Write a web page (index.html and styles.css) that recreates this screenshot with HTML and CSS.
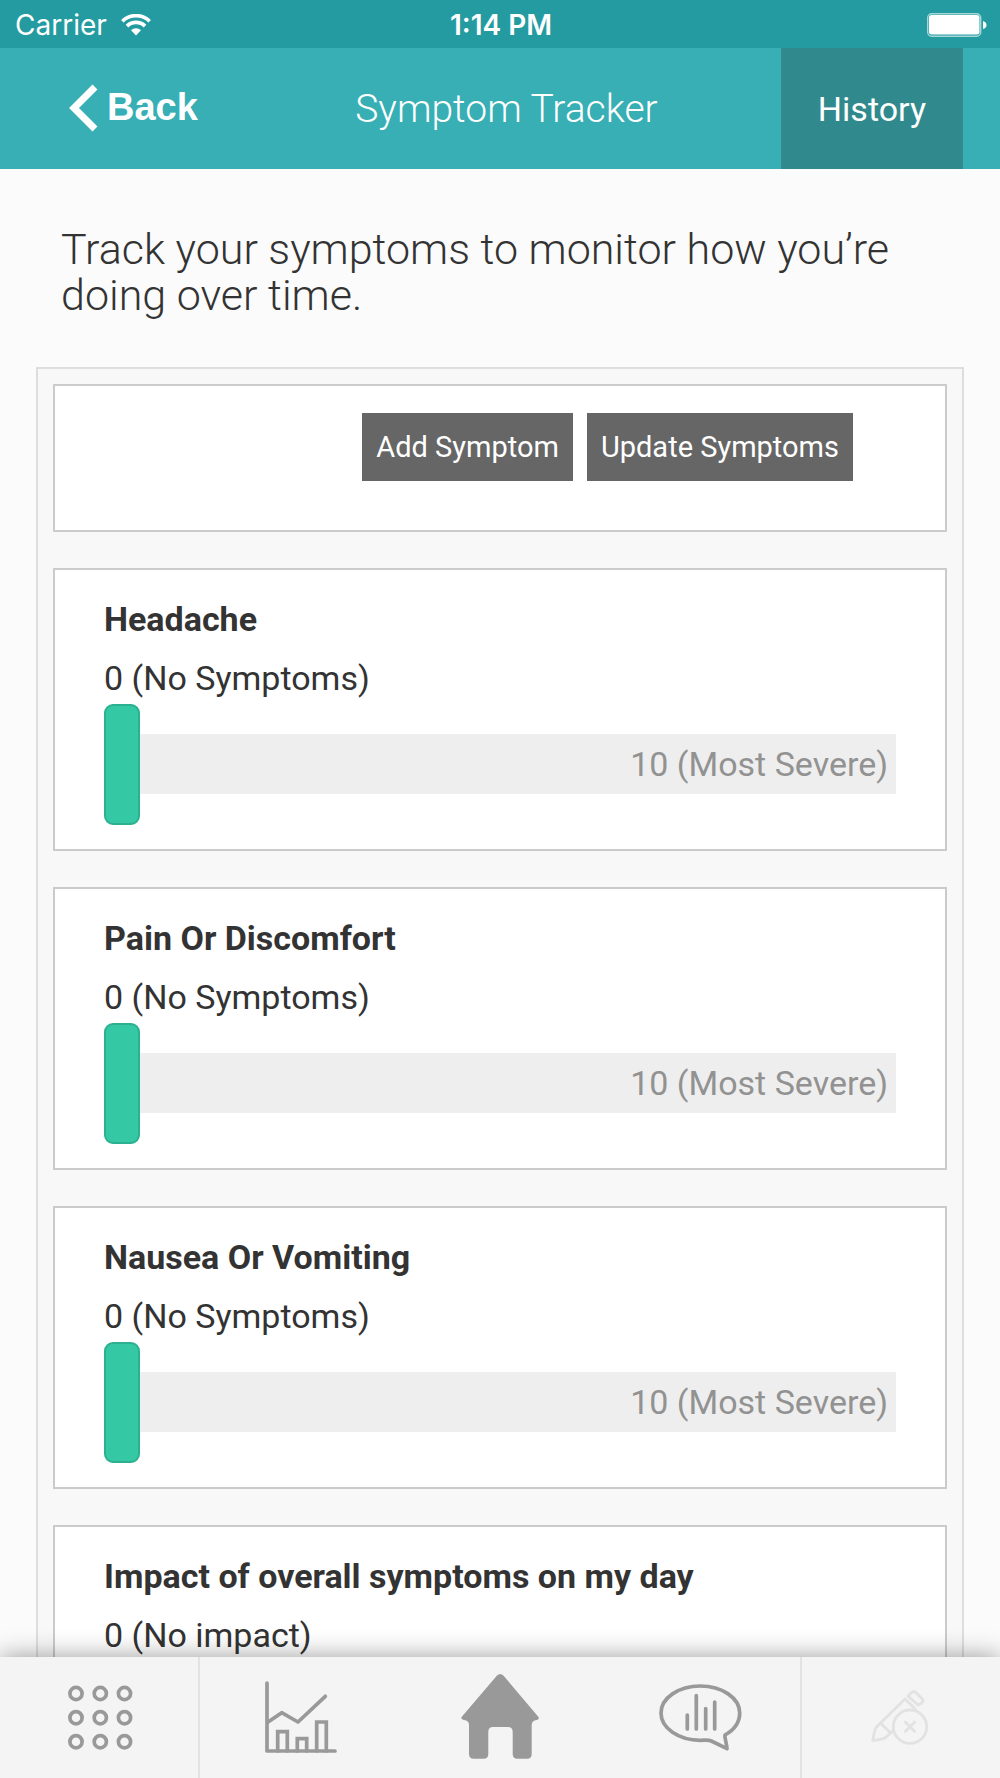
FILE: index.html
```html
<!DOCTYPE html>
<html lang="en">
<head>
    <meta charset="UTF-8">
    <meta name="viewport" content="width=device-width, initial-scale=1.0">
    <title>Symptom Tracker</title>
    <link rel="stylesheet" href="styles.css">
</head>
<body>
    <div class="status-bar">
        <div class="carrier">
            <span>Carrier</span>
            <svg width="30" height="22" viewBox="0 0 30 22" fill="none" stroke="#fff" stroke-width="3.6">
                <path d="M1.3 7.2a19.5 19.5 0 0 1 27.4 0"/>
                <path d="M6 12.1a12.8 12.8 0 0 1 18 0"/>
                <path d="M15 21.5l-5-5.2a7 7 0 0 1 10 0z" fill="#fff" stroke="none"/>
            </svg>
        </div>
        <div class="time">1:14 PM</div>
        <svg class="battery" width="60" height="24" viewBox="0 0 60 24">
            <rect x="0.7" y="0.7" width="53" height="22.6" rx="4" fill="none" stroke="#a5d7d8" stroke-width="1.4"/>
            <rect x="2" y="2" width="50.5" height="19.5" rx="2.5" fill="#fff"/>
            <path d="M56 8q3.5 1 3.5 4t-3.5 4z" fill="#fff"/>
        </svg>
    </div>

    <header class="navbar">
        <a class="back" href="#">
            <svg width="30" height="48" viewBox="0 0 30 48" fill="none" stroke="#fff" stroke-width="7">
                <path d="M26 3L5 24l21 21"/>
            </svg>
            <span>Back</span>
        </a>
        <h1>Symptom Tracker</h1>
        <button class="history" type="button">History</button>
    </header>

    <main>
        <p class="intro">Track your symptoms to monitor how you’re doing over time.</p>

        <div class="panel">
            <div class="card actions">
                <button type="button">Add Symptom</button>
                <button type="button">Update Symptoms</button>
            </div>

            <div class="card">
                <label class="name" for="headache">Headache</label>
                <div class="value">0 (No Symptoms)</div>
                <div class="slider">
                    <input type="range" id="headache" min="0" max="10" value="0">
                    <span class="max">10 (Most Severe)</span>
                </div>
            </div>

            <div class="card">
                <label class="name" for="pain">Pain Or Discomfort</label>
                <div class="value">0 (No Symptoms)</div>
                <div class="slider">
                    <input type="range" id="pain" min="0" max="10" value="0">
                    <span class="max">10 (Most Severe)</span>
                </div>
            </div>

            <div class="card">
                <label class="name" for="nausea">Nausea Or Vomiting</label>
                <div class="value">0 (No Symptoms)</div>
                <div class="slider">
                    <input type="range" id="nausea" min="0" max="10" value="0">
                    <span class="max">10 (Most Severe)</span>
                </div>
            </div>

            <div class="card">
                <label class="name" for="impact">Impact of overall symptoms on my day</label>
                <div class="value">0 (No impact)</div>
                <div class="slider">
                    <input type="range" id="impact" min="0" max="10" value="0">
                </div>
            </div>
        </div>
    </main>

    <nav class="tabs">
        <a href="#" aria-label="Menu">
            <svg viewBox="-1 0 100 121">
                <circle cx="26" cy="36.5" r="6.1"/><circle cx="50.3" cy="36.5" r="6.1"/><circle cx="74.5" cy="36.5" r="6.1"/>
                <circle cx="26" cy="60.7" r="6.1"/><circle cx="50.3" cy="60.7" r="6.1"/><circle cx="74.5" cy="60.7" r="6.1"/>
                <circle cx="26" cy="84.7" r="6.1"/><circle cx="50.3" cy="84.7" r="6.1"/><circle cx="74.5" cy="84.7" r="6.1"/>
            </svg>
        </a>
        <a href="#" aria-label="Charts">
            <svg viewBox="0 0 100 121">
                <path d="M17 26v68h68"/>
                <path d="M17.7 65.3l14-9.6L48 65l27.3-25.7"/>
                <path d="M27.7 94V74.7h9.6V94M47.3 94V81.7h9.4V94M66.7 94V65h9.6v29" stroke-linejoin="miter"/>
            </svg>
        </a>
        <a href="#" aria-label="Home">
            <svg class="solid" viewBox="0 0 100 121">
                <path d="M47 18.5q3.2-3 6.4 0L88.5 60q1.3 2.6-1.8 2.9-5 .6-5 4.8V97q0 4.7-4.7 4.7h-9.6q-4.700 0-4.700-4.700V74.700q0-4.700-4.700-4.700H43q-4.700 0-4.700 4.700V97q0 4.700-4.700 4.700H23.700Q19 101.700 19 97V67.700q0-4.200-5-4.800-3.600-.4-2.400-2.900z"/>
            </svg>
        </a>
        <a href="#" aria-label="Messages">
            <svg viewBox="0 0 100 121">
                <path d="M75 78C84 73 89.700 65 89.700 56 89.700 41 72 29 50.300 29S11 41 11 56s17.500 27.300 39.300 27.300c6 0 8-.6 11 .7L77 91.700c-.3-5-2.600-11.500-2-13.700z"/>
                <path d="M37.300 72V58M46.300 72V38.500M55.700 72V51.500M64.700 72V45"/>
            </svg>
        </a>
        <a class="disabled" href="#" aria-label="Edit">
            <svg viewBox="1 0 100 121">
                <circle cx="60" cy="69.700" r="16.700"/>
                <path d="M55.300 65l9.400 9.400M64.700 65l-9.400 9.400"/>
                <path d="M65.300 52L55 42 27 69.500q-2 2-2.500 5l-1.800 9.200 9-1.600q3-.6 5-2.600l6.500-6"/>
                <path d="M30.700 66.300l10 9.700"/>
                <path d="M58 39l3.500-3.500q2.200-2.200 4.400 0l6 6q2.200 2.200 0 4.400L68 48z"/>
            </svg>
        </a>
    </nav>
</body>
</html>
```
FILE: styles.css
```css
* {
    box-sizing: border-box;
}
body {
    margin: 0;
    height: 100vh;
    display: flex;
    flex-direction: column;
    font-family: Roboto, sans-serif;
    color: #333;
    background: #fbfbfb;
}
button {
    border: none;
    font-family: inherit;
    color: white;
    cursor: pointer;
}

/* status bar */
.status-bar {
    display: grid;
    grid-template-columns: 1fr auto 1fr;
    align-items: center;
    height: 48px;
    padding: 2px 13px 0 15px;
    background: #239ba0;
    color: white;
    font-family: Inter, sans-serif;
    font-size: 28px;
}
.carrier {
    display: flex;
    align-items: center;
    gap: 14px;
}
.time {
    font-weight: 600;
}
.battery {
    justify-self: end;
}

/* nav bar */
.navbar {
    display: grid;
    grid-template-columns: 1fr auto 1fr;
    align-items: center;
    height: 121px;
    padding: 0 37px 0 50px;
    background: #37afb4;
    color: white;
}
.back {
    display: flex;
    align-items: center;
    gap: 8px;
    padding: 0 0 2px 19px;
    color: white;
    font-family: "Liberation Sans", Arial, sans-serif;
    font-size: 38px;
    font-weight: bold;
    text-decoration: none;
}
.navbar h1 {
    margin: 0;
    font-size: 39px;
    font-weight: 300;
}
.history {
    justify-self: end;
    height: 100%;
    padding: 0 37px;
    background: #308a8d;
    font-size: 34px;
}

/* content */
main {
    flex: 1;
    min-height: 0;
    padding: 0 36px;
    overflow-y: auto;
    scrollbar-width: none;
}
.intro {
    margin: 0;
    padding: 57px 25px 49px;
    font-size: 43px;
    font-weight: 300;
    line-height: 46px;
}
.panel {
    display: flex;
    flex-direction: column;
    gap: 36px;
    padding: 15px;
    border: 2px solid #dedede;
    background: #f8f8f8;
}
.card {
    padding: 14px 49px 25px;
    border: 2px solid #cbcbcb;
    background: white;
}
.actions {
    display: flex;
    justify-content: flex-end;
    gap: 14px;
    padding: 27px 92px 49px 49px;
}
.actions button {
    height: 68px;
    padding: 0 14px;
    background: #666;
    font-size: 29px;
}
.name {
    display: block;
    font-size: 34px;
    font-weight: bold;
    line-height: 70px;
}
.value {
    font-size: 34px;
    line-height: 49px;
}

/* the end label shares the grid cell of the range input */
.slider {
    display: grid;
    align-items: center;
}
.slider input,
.slider .max {
    grid-area: 1 / 1;
}
.slider input {
    -webkit-appearance: none;
    appearance: none;
    width: 100%;
    height: 121px;
    margin: 0;
    background: none;
}
.slider input::-webkit-slider-runnable-track {
    height: 60px;
    background: #eee;
}
.slider input::-webkit-slider-thumb {
    -webkit-appearance: none;
    width: 36px;
    height: 121px;
    margin-top: -30px;
    border: 2px solid #2bb190;
    border-radius: 9px;
    background: #34c8a4;
}
.slider .max {
    justify-self: end;
    padding-right: 8px;
    color: #929292;
    font-size: 34px;
    pointer-events: none;
}

/* bottom tabs */
.tabs {
    position: relative;
    display: grid;
    grid-template-columns: repeat(5, 1fr);
    height: 121px;
    background: #f4f4f4;
    box-shadow: 0 0 24px rgba(0,0,0,0.4);
}
.tabs a {
    display: flex;
    justify-content: center;
}
.tabs a:first-child {
    border-right: 2px solid #e3e3e3;
}
.tabs a:last-child {
    border-left: 2px solid #e3e3e3;
}
.tabs svg {
    width: 100px;
    height: 121px;
    fill: none;
    stroke: #999;
    stroke-linecap: round;
    stroke-linejoin: round;
    stroke-width: 3.7px;
}
.tabs .solid {
    fill: #999;
    stroke: none;
}
.tabs .disabled svg {
    stroke: #e2e2e2;
    stroke-width: 2.8px;
}
```
